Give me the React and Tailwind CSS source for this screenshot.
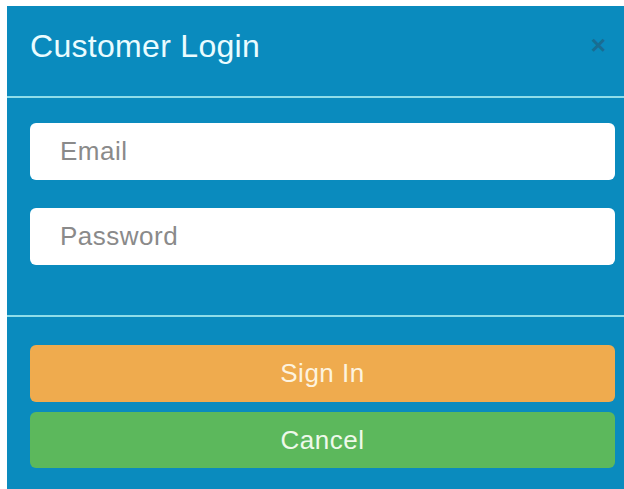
const fieldClass =
  "h-[57px] w-full rounded-md bg-white pl-[30px] text-[26px] tracking-[0.5px] text-gray-800 placeholder:text-[#8a8a8a] outline-none";

const LoginModal = () => {
  return (
    <div className="mt-[6px] ml-[7px] flex h-[483px] w-[631px] flex-col bg-[#0a8bbe] font-['Liberation_Sans',Arial,sans-serif]">
      {/* Header */}
      <div className="flex h-[90px] items-center justify-between pl-[23px] pr-[32px]">
        <h2 className="mt-[-10px] text-[32px] tracking-[0.3px] leading-none text-[#eafcff]">
          Customer Login
        </h2>
        <button className="mt-[-12px] text-[26px] font-bold leading-none text-[#1d6688] opacity-80">
          ×
        </button>
      </div>
      <div className="h-[2px] bg-[#8fdde9]" />

      {/* Form fields */}
      <div className="flex flex-col gap-[28px] px-[23px] pt-[25px] pb-[50px]">
        <input type="email" placeholder="Email" className={fieldClass} />
        <input type="password" placeholder="Password" className={fieldClass} />
      </div>
      <div className="h-[2px] bg-[#8fdde9]" />

      {/* Actions */}
      <div className="flex flex-col gap-[10px] px-[23px] pt-[28px]">
        <button className="h-[57px] w-full rounded-md bg-[#efab4e] text-[26px] tracking-[0.5px] text-[#fdf3df]">
          Sign In
        </button>
        <button className="h-[56px] w-full rounded-md bg-[#5cb85c] text-[26px] tracking-[0.5px] text-[#eef9ea]">
          Cancel
        </button>
      </div>
    </div>
  );
};

export default function App() {
  return (
    <div className="h-[489px] w-[624px] overflow-hidden bg-white">
      <LoginModal />
    </div>
  );
}
